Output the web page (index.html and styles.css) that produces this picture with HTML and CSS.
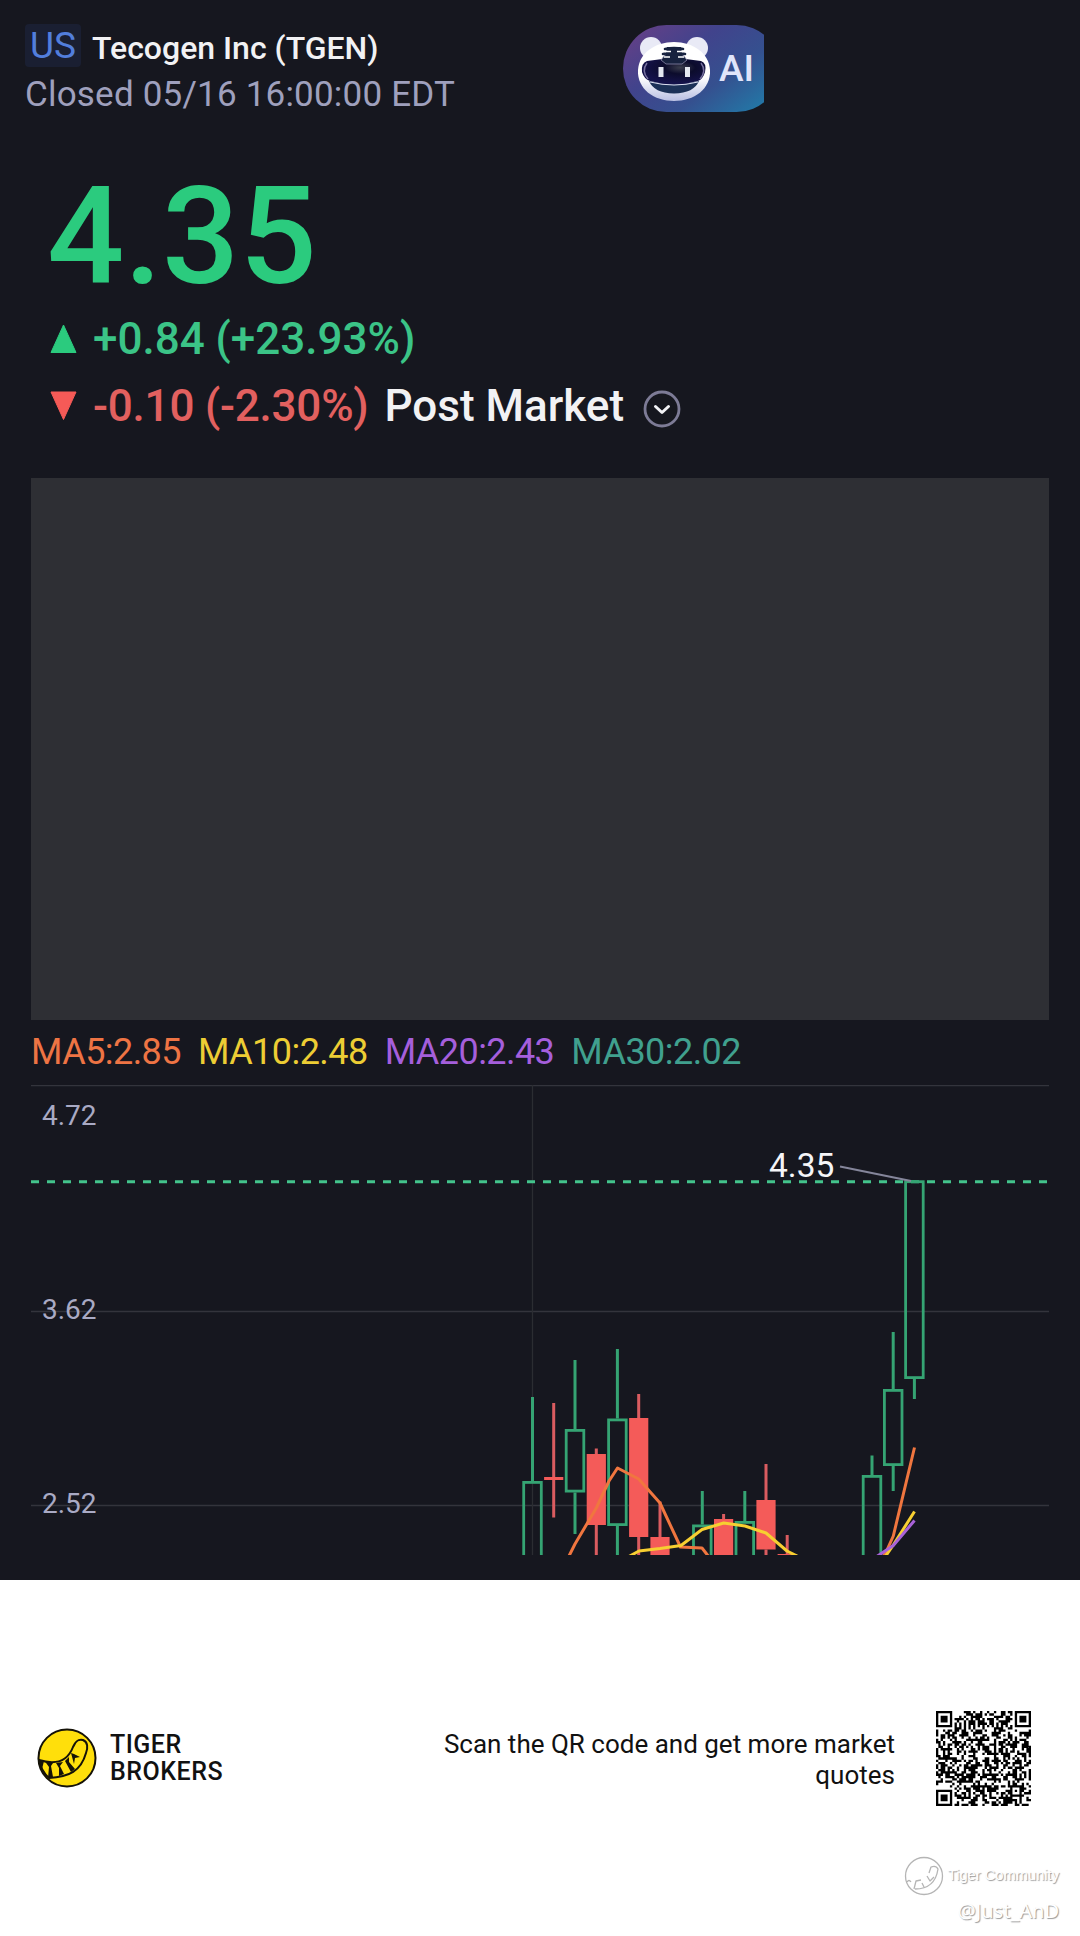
FILE: index.html
```html
<!DOCTYPE html>
<html lang="en">
<head>
  <meta charset="UTF-8" />
  <meta name="viewport" content="width=device-width, initial-scale=1.0" />
  <title>Tecogen Inc (TGEN)</title>
  <link rel="stylesheet" href="styles.css">
</head>
<body>

<div class="quote">
  <div class="header">
    <div class="stock">
      <div class="name"><span class="market">US</span><span class="title">Tecogen Inc (TGEN)</span></div>
      <div class="status">Closed 05/16 16:00:00 EDT</div>
    </div>
    <div class="ai">
      <svg width="142" height="87" viewBox="0 0 142 87">
        <defs>
          <linearGradient id="pill" x1="0" y1="0" x2="1" y2="0.75">
            <stop offset="0" stop-color="#6b3f86"/>
            <stop offset="0.4" stop-color="#41438c"/>
            <stop offset="0.7" stop-color="#35508f"/>
            <stop offset="1" stop-color="#2475a5"/>
          </linearGradient>
          <linearGradient id="face" x1="0" y1="0" x2="0" y2="1">
            <stop offset="0.6" stop-color="#ffffff"/>
            <stop offset="1" stop-color="#b9bfe2"/>
          </linearGradient>
          <radialGradient id="visor" cx="0.6" cy="0.35" r="0.6">
            <stop offset="0" stop-color="#3a3d4c"/>
            <stop offset="0.4" stop-color="#0c0c2c"/>
            <stop offset="1" stop-color="#14124a"/>
          </radialGradient>
        </defs>
        <rect x="0" y="0" width="157" height="87" rx="43.5" fill="url(#pill)"/>
        <circle cx="28" cy="23" r="11" fill="#e9eaf6"/>
        <circle cx="74" cy="23" r="11" fill="#e9eaf6"/>
        <path d="M51 17C70 17 86 28 87 45C88 64 71 76 51 76C31 76 14 64 15 45C16 28 32 17 51 17Z" fill="url(#face)"/>
        <path d="M26 56Q51 62 76 56Q71 68 51 68.500Q31 68 26 56Z" fill="#1c3157"/>
        <path d="M24 36Q51 31 78 36Q84 38 82 47Q80 54 75 56Q51 63 27 56Q21 54 19 47Q18 38 24 36Z" fill="url(#visor)"/>
        <path d="M27 57Q51 63 75 57" fill="none" stroke="#dfe1f3" stroke-width="1"/>
        <path d="M24 38Q18 46 25 54M78 38Q84 46 77 54" fill="none" stroke="#77719f" stroke-width="1.500"/>
        <path d="M38 35L43 39H59L64 35L60 30H42Z" fill="#17223f" stroke="#8987a7" stroke-width="0.800"/>
        <path d="M44 22H58L60 34H42Z" fill="#17223f"/>
        <path d="M42 24Q51 22 60 24M40 29Q51 27 62 29" fill="none" stroke="#17223f" stroke-width="2.600" stroke-linecap="round"/>
        <path d="M42 26.500H48M54 26.500H60M41 32H47M55 32H61" stroke="#fff" stroke-width="1.500"/>
        <rect x="35.500" y="42" width="5" height="10" fill="#e3e7ef"/>
        <rect x="62" y="42" width="5" height="10" fill="#e3e7ef"/>
      </svg>
      <span class="ai-text">AI</span>
    </div>
  </div>

  <div class="price">4.35</div>
  <div class="change up">
    <svg class="arrow" width="28" height="30" viewBox="0 0 28 30"><path d="M13.500 1L26 28.500H1Z" fill="#2bcb7e" stroke="#2bcb7e" stroke-linejoin="round"/></svg>
    <span class="change-text">+0.84 (+23.93%)</span>
  </div>
  <div class="change down">
    <svg class="arrow" width="28" height="30" viewBox="0 0 28 30"><path d="M13.500 28.500L26 1H1Z" fill="#f65a57" stroke="#f65a57" stroke-linejoin="round"/></svg>
    <span class="change-text">-0.10 (-2.30%)</span>
    <span class="session">Post Market</span>
    <svg class="more" width="38" height="38" viewBox="0 0 38 38" fill="none">
      <circle cx="19" cy="19" r="17" stroke="#7d7b96" stroke-width="2.800"/>
      <path d="M12.500 16.500L19 22.500L25.500 16.500" stroke="#f2f2f6" stroke-width="3" stroke-linecap="round" stroke-linejoin="round"/>
    </svg>
  </div>

  <div class="blank"></div>

  <div class="averages">
    <span class="ma5">MA5:2.85</span>
    <span class="ma10">MA10:2.48</span>
    <span class="ma20">MA20:2.43</span>
    <span class="ma30">MA30:2.02</span>
  </div>

  <svg class="chart" width="1018" height="470" viewBox="31 1085 1018 470">
    <g class="grid">
      <path d="M31 1085.500H1049M31 1311.500H1049M31 1505.500H1049"/>
      <path class="grid-v" d="M532.500 1085V1555"/>
    </g>
    <g class="axis">
      <text x="42" y="1125">4.72</text>
      <text x="42" y="1319">3.62</text>
      <text x="42" y="1512.500">2.52</text>
    </g>
    <path class="last" d="M31 1181.700H1048"/>
    <g id="candles"></g>
    <path class="line" stroke="#f0763f" d="M568.500 1557L575 1544L596.300 1508L609 1481L617.500 1468L638.700 1479L660 1503L680.500 1547L702 1548L709 1557M883 1557L887 1550L893.300 1536L914.500 1447.500"/>
    <path class="line" stroke="#f7cf31" d="M628 1557L639 1551L660 1548.500L681 1545.500L702 1529.500L723.700 1523L745 1526L766 1533L787 1551L799 1557M885 1557L893.300 1545L914.500 1511.500"/>
    <path class="line" stroke="#a862d8" d="M876 1557L893.300 1545.500L914.500 1520.500"/>
    <path class="leader" d="M840 1166.500L911 1181"/>
    <text class="tag" x="769" y="1176.500">4.35</text>
  </svg>
</div>

<div class="footer">
  <svg class="logo" width="60" height="60" viewBox="0 0 60 60">
    <circle cx="30" cy="30" r="28.500" fill="#ffdf0b" stroke="#151208" stroke-width="2"/>
    <path d="M2 32Q28 40 36 19C39 12 42 11 46 12C51 14 51 20 49 25C44 43 32 49 12 50Q4 43 2 32Z" fill="#ffdf0b" stroke="#151208" stroke-width="2"/>
    <path d="M2 32L7 33L5 41ZM8 33.500L16 35L14 38L16 49L11 50L12 39ZM19 35L26 34L23 38L27 46L22 48L22 40ZM28 33L32 29L32 34L38 41L34 44ZM34 25L37 26L43 29L38 30L37 36Z" fill="#151208"/>
  </svg>
  <div class="brand">TIGER<br>BROKERS</div>
  <div class="scan">Scan the QR code and get more market quotes</div>
  <svg class="qr" id="qr" width="95" height="95" viewBox="0 0 41 41"></svg>
  <div class="watermark">
    <div class="community">
      <svg width="40" height="40" viewBox="0 0 40 40" fill="none" stroke="#b5b5b5" stroke-width="1.300">
        <circle cx="20" cy="20" r="18.500"/>
        <path d="M3 26Q5 23 7 26M10 33L12 25L17 24M11 33Q31 33 34 13Q32 9 27 11L25 17M18 27L20 31M23 20L26 25L30 21" stroke-linejoin="round"/>
      </svg>
      <span>Tiger Community</span>
    </div>
    <div class="user">@Just_AnD</div>
  </div>
</div>

<script>
  // direction, x, high, body top, body bottom, low (in chart pixels)
  const candles = [
    ["up", 532.5, 1397, 1481, 1570, 1570],
    ["down", 553.7, 1403, 1477, 1480, 1517.5],
    ["up", 575, 1360, 1429, 1492.5, 1534],
    ["down", 596.3, 1448.5, 1454, 1525, 1560],
    ["up", 617.4, 1349, 1418.5, 1526, 1560],
    ["down", 638.7, 1394, 1418, 1537, 1560],
    ["down", 660, 1501.5, 1537, 1560, 1560],
    ["up", 702.3, 1491, 1524.5, 1570, 1570],
    ["down", 723.6, 1514, 1519, 1560, 1560],
    ["up", 744.8, 1491, 1521, 1570, 1570],
    ["down", 766, 1464, 1500, 1549.5, 1560],
    ["down", 787.2, 1535, 1554, 1560, 1560],
    ["up", 872, 1455.5, 1475, 1570, 1570],
    ["up", 893.2, 1332, 1389, 1466, 1491],
    ["up", 914.4, 1181, 1180.3, 1379, 1399]
  ];

  let shapes = "";
  for (const [dir, x, high, top, bottom, low] of candles) {
    shapes += `<path class="wick-${dir}" d="M${x} ${high}V${top}M${x} ${bottom}V${low}"/>`;
    if (dir === "up") {
      shapes += `<rect class="body-up" x="${x - 8.8}" y="${top + 1.4}" width="17.6" height="${bottom - top - 2.8}"/>`;
    } else {
      shapes += `<rect class="body-down" x="${x - 9.6}" y="${top}" width="19.2" height="${bottom - top}"/>`;
    }
  }
  document.getElementById("candles").innerHTML = shapes;

  // QR modules
  const size = 41;
  let seed = 516;
  function nextBit() {
    seed = (seed * 1103515245 + 12345) % 2147483648;
    return (seed >> 16) & 1;
  }

  function finder(x, y) {
    const d = Math.max(Math.abs(x - 3), Math.abs(y - 3));
    return d === 3 || d <= 1;
  }

  let modules = "";
  for (let y = 0; y < size; y++) {
    for (let x = 0; x < size; x++) {
      let on = nextBit();
      if (x < 8 && y < 8) on = finder(x, y);
      else if (x > 32 && y < 8) on = finder(x - 34, y);
      else if (x < 8 && y > 32) on = finder(x, y - 34);
      else if (x > 31 && x < 37 && y > 31 && y < 37) on = Math.max(Math.abs(x - 34), Math.abs(y - 34)) !== 1;
      else if (x === 6 || y === 6) on = (x + y) % 2 === 0;
      if (on) modules += `M${x} ${y}h1v1h-1z`;
    }
  }
  document.getElementById("qr").innerHTML = `<path d="${modules}"/>`;
</script>

</body>
</html>
```
FILE: styles.css
```css
* {
  box-sizing: border-box;
}
body {
  margin: 0;
  width: 1080px;
  height: 1936px;
  overflow: hidden;
  font-family: Roboto, 'Liberation Sans', sans-serif;
  background: #fff;
}
svg {
  display: block;
  flex: none;
}
.quote {
  height: 1580px;
  background: #16171f;
  color: #f2f2f4;
  white-space: nowrap;
}
.header {
  display: flex;
  height: 167px;
  padding: 24px 0 0 25px;
}
.stock {
  width: 598px;
}
.name {
  display: flex;
  height: 44px;
}
.market {
  width: 56px;
  height: 43px;
  padding-left: 5px;
  border-radius: 4px;
  background: #1a1f32;
  color: #527edc;
  font-size: 37px;
  line-height: 43px;
}
.title {
  margin-left: 11px;
  font-size: 32px;
  font-weight: 500;
  line-height: 48px;
}
.status {
  color: #9fa0bd;
  font-size: 35px;
  line-height: 53px;
  letter-spacing: 0.200px;
}
.ai {
  position: relative;
  width: 141px;
  height: 87px;
  margin-top: 1px;
  overflow: hidden;
}
.ai-text {
  position: absolute;
  left: 96px;
  top: 22px;
  color: #e0e5fa;
  font-size: 37px;
  font-weight: 500;
  line-height: 44px;
}
.price {
  height: 138px;
  padding-left: 47px;
  color: #2bcb7e;
  font-size: 136px;
  font-weight: 500;
  line-height: 140px;
}
.change {
  display: flex;
  align-items: center;
  height: 67px;
  padding-left: 50px;
  font-size: 44px;
  font-weight: 500;
}
.change-text {
  margin-left: 15px;
}
.up {
  color: #3bc487;
}
.down {
  color: #e2605f;
}
.down .change-text {
  letter-spacing: -0.200px;
}
.session {
  margin-left: 16px;
  color: #f2f2f4;
}
.more {
  margin: 7px 0 0 19px;
}
.blank {
  height: 542px;
  margin: 39px 31px 0;
  background: #2e2f34;
}
.averages {
  display: flex;
  gap: 17px;
  height: 65px;
  padding-left: 31px;
  font-size: 36px;
  line-height: 64px;
  letter-spacing: -0.550px;
}
.ma5 { color: #ee7444; }
.ma10 { color: #edcd34; }
.ma20 { color: #a55fdc; }
.ma30 { color: #40a08e; }
.chart {
  margin-left: 31px;
}
.grid path {
  stroke: #33343c;
  stroke-width: 1.300;
}
.grid .grid-v {
  stroke: #2b2d32;
}
.axis text {
  fill: #a9aac4;
  font-size: 28px;
}
.last {
  stroke: #43c48c;
  stroke-width: 3;
  stroke-dasharray: 8 8;
}
.wick-up {
  stroke: #35a473;
  stroke-width: 3;
}
.wick-down {
  stroke: #da5c60;
  stroke-width: 3;
}
.body-up {
  fill: none;
  stroke: #35a473;
  stroke-width: 2.800;
}
.body-down {
  fill: #f45b59;
}
.line {
  fill: none;
  stroke-width: 3;
  stroke-linejoin: round;
}
.leader {
  stroke: #85869b;
  stroke-width: 2;
}
.tag {
  fill: #f5f5f8;
  font-size: 33.500px;
}
.footer {
  position: relative;
  display: flex;
  align-items: center;
  height: 356px;
  padding-left: 37px;
  color: #111;
}
.brand {
  width: 160px;
  margin-left: 13px;
  font-size: 25px;
  font-weight: 500;
  line-height: 27px;
  letter-spacing: 0.500px;
}
.scan {
  width: 471px;
  margin: 3px 0 0 154px;
  font-size: 26px;
  line-height: 31px;
  text-align: right;
}
.qr {
  margin-left: 41px;
}
/* community stamp over the footer corner */
.watermark {
  position: absolute;
  right: 21px;
  bottom: 10px;
  color: #fff;
  text-align: right;
  text-shadow: 1px 1px 1px #999;
}
.community {
  display: flex;
  align-items: center;
  gap: 4px;
  font-family: 'Liberation Sans', sans-serif;
  font-size: 14.700px;
}
.community span {
  margin-top: -3px;
}
.user {
  font-family: 'Noto Sans', sans-serif;
  font-size: 20px;
  line-height: 30px;
}
```
